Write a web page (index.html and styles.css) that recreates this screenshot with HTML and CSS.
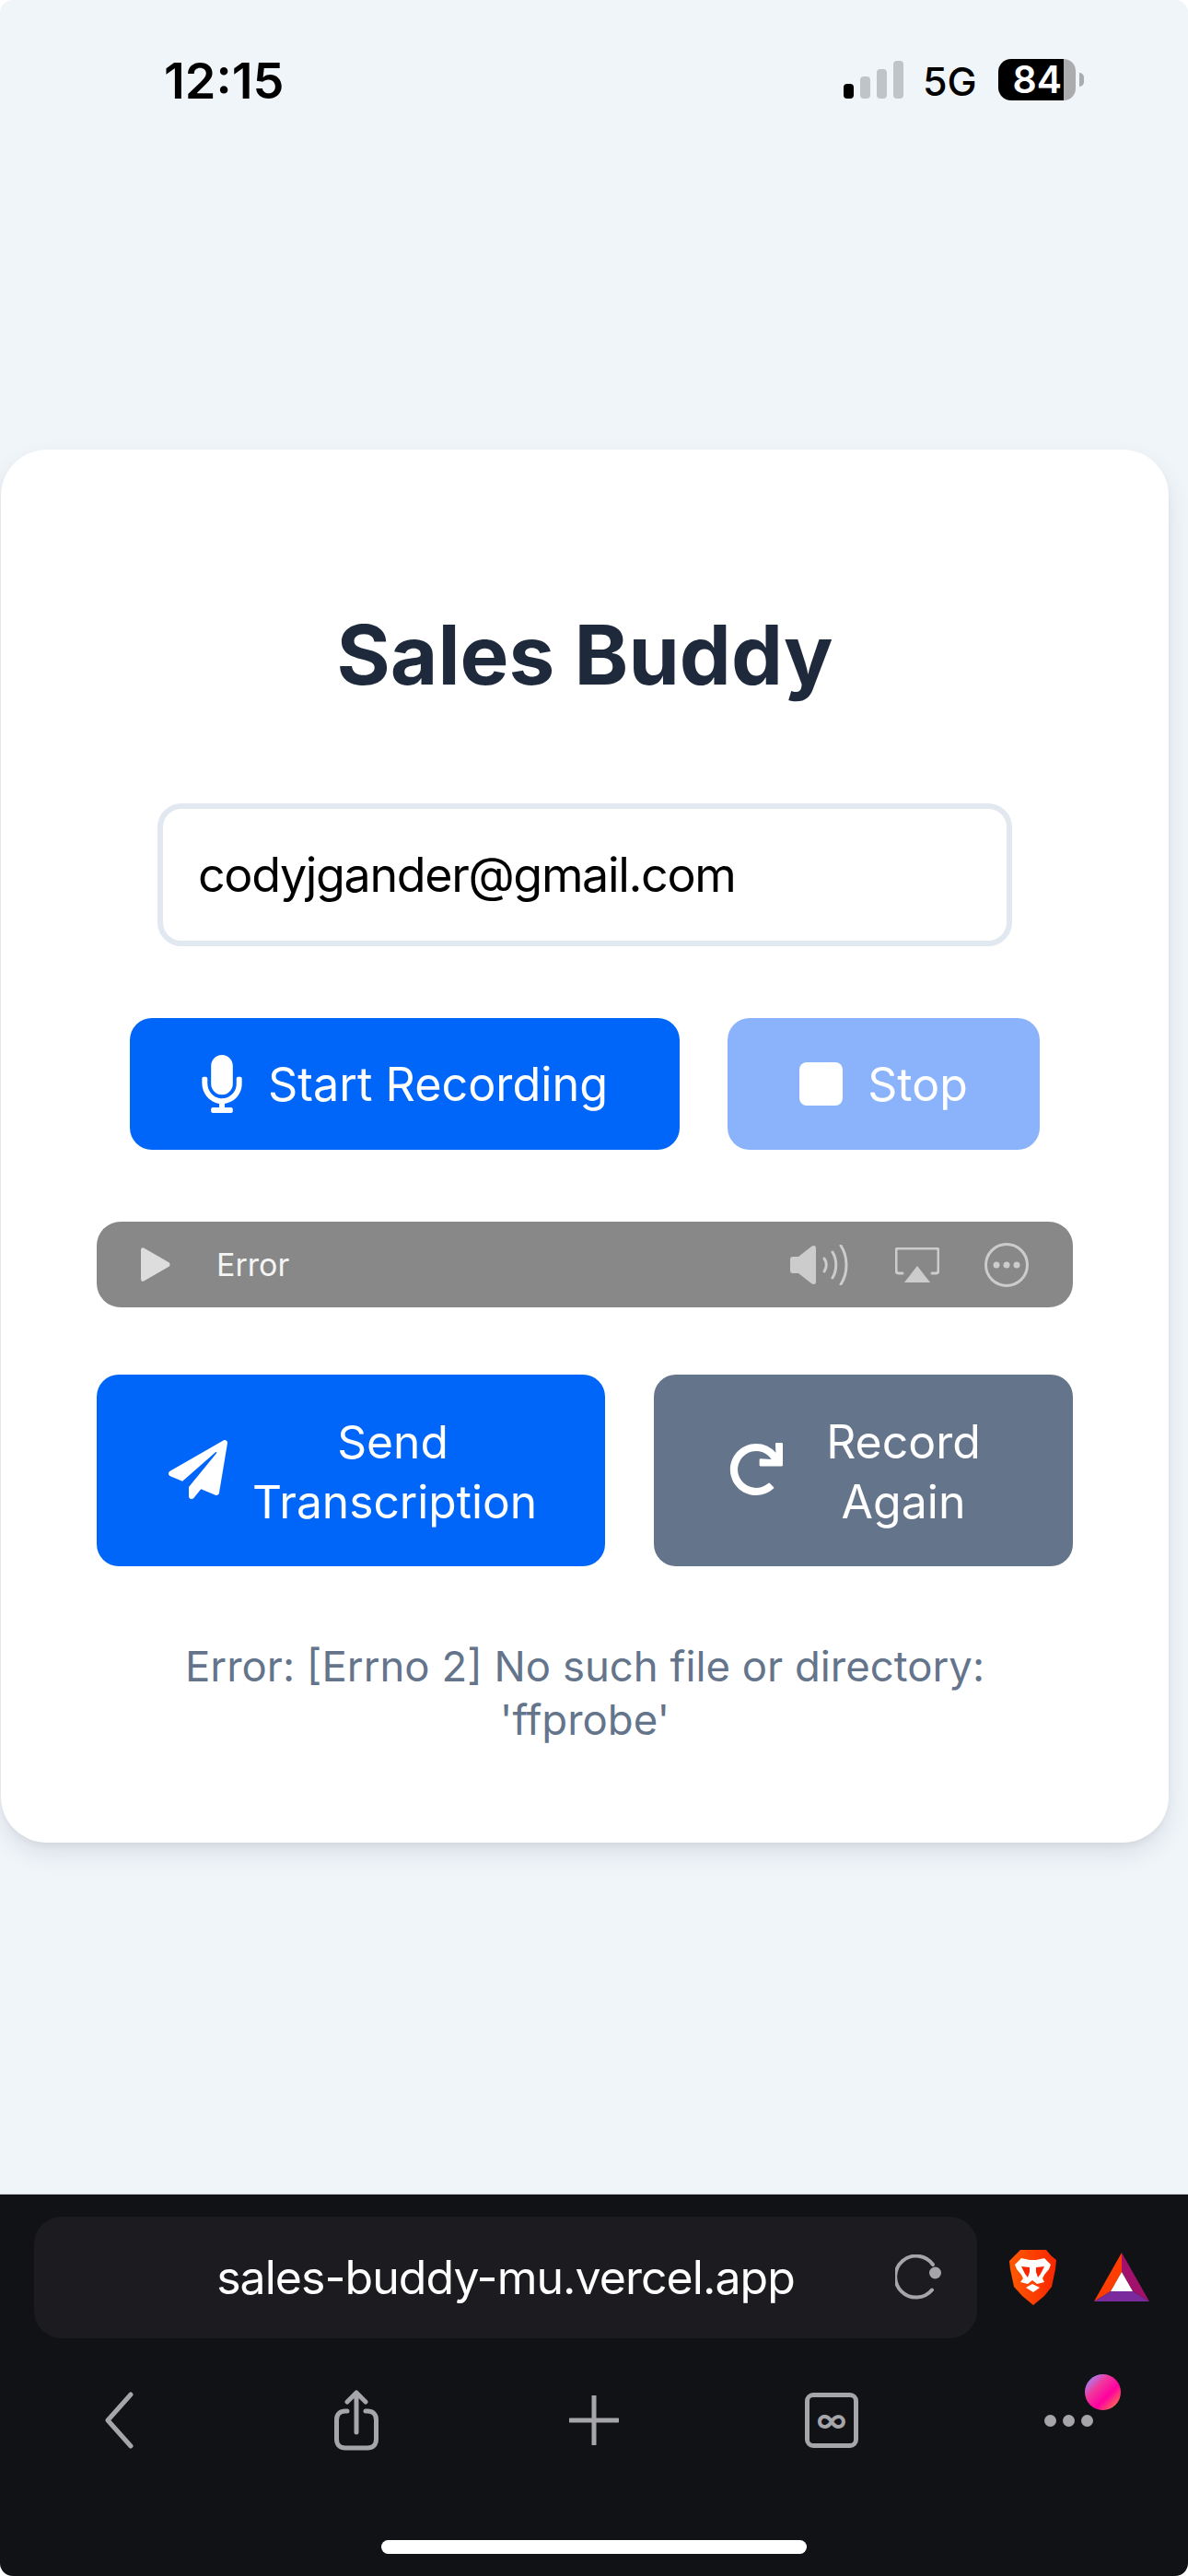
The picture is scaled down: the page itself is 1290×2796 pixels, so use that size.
FILE: index.html
```html
<!DOCTYPE html>
<html lang="en">
<head>
  <meta charset="UTF-8">
  <meta name="viewport" content="width=device-width, initial-scale=1.0">
  <title>Sales Buddy</title>
  <link rel="stylesheet" href="styles.css">
</head>
<body>
  <div class="screen">
    <!-- status bar -->
    <div class="status">
      <span class="time">12:15</span>
      <div class="status-right">
        <div class="signal">
          <i class="bar b1 on"></i><i class="bar b2"></i><i class="bar b3"></i><i class="bar b4"></i>
        </div>
        <span class="net">5G</span>
        <div class="battery"><span class="level">84</span><i class="rest"></i></div>
        <i class="tip"></i>
      </div>
    </div>

    <main class="page">
      <div class="card">
        <h1 class="title">Sales Buddy</h1>
        <div class="email">codyjgander@gmail.com</div>

        <div class="row row-rec">
          <button class="btn blue start">
            <svg class="ic-mic" viewBox="0 0 352 512"><path d="M176 352c53.02 0 96-42.98 96-96V96c0-53.02-42.98-96-96-96S80 42.98 80 96v160c0 53.02 42.98 96 96 96zm160-160h-16c-8.84 0-16 7.16-16 16v48c0 74.8-64.49 134.82-140.79 127.38C96.71 376.89 48 317.11 48 250.3V208c0-8.84-7.16-16-16-16H16c-8.84 0-16 7.16-16 16v40.16c0 89.64 63.97 169.55 152 181.69V464H96c-8.84 0-16 7.16-16 16v16c0 8.84 7.16 16 16 16h160c8.84 0 16-7.16 16-16v-16c0-8.84-7.16-16-16-16h-56v-33.77C285.71 418.47 352 344.9 352 256v-48c0-8.84-7.16-16-16-16z"/></svg>
            <span>Start Recording</span>
          </button>
          <button class="btn stop">
            <i class="ic-stop"></i>
            <span>Stop</span>
          </button>
        </div>

        <div class="audio">
          <svg class="ic-play" viewBox="0 0 32 37"><path d="M0 3c0-3 2-3.500 4-2l26 15c2 1.200 2 3.800 0 5L4 36c-2 1.500-4 1-4-2z"/></svg>
          <span class="audio-err">Error</span>
          <div class="audio-right">
            <svg class="ic-vol" viewBox="0 0 66 44"><path class="fill" d="M1 16c0-2 1-3 3-3h6L24 2c3-2 5-1 5 2v36c0 3-2 4-5 2L10 31H4c-2 0-3-1-3-3z"/><path class="wave" d="M38 15c3 4 3 10 0 14M47 8c5 8 5 20 0 28M56 1c8 12 8 30 0 42"/></svg>
            <svg class="ic-air" viewBox="0 0 48 38"><path class="line" d="M8 28H4c-2 0-3-1-3-3V3c0-1 1-2 2-2h42c1 0 2 1 2 2v22c0 2-1 3-3 3h-4"/><path class="fill" d="M24 20l14 18H10z"/></svg>
            <svg class="ic-more" viewBox="0 0 48 48"><circle class="line" cx="24" cy="24" r="22.500"/><circle class="fill" cx="13" cy="24" r="3.500"/><circle class="fill" cx="24" cy="24" r="3.500"/><circle class="fill" cx="35" cy="24" r="3.500"/></svg>
          </div>
        </div>

        <div class="row row-send">
          <button class="btn blue tall send">
            <svg class="ic-plane" viewBox="0 0 512 512"><path d="M476 3.200L12.500 270.600c-18.100 10.400-15.800 35.600 2.200 43.200L121 358.400l287.300-253.200c5.500-4.900 13.300 2.600 8.600 8.300L176 407v80.500c0 23.600 28.500 32.900 42.500 15.800L282 426l124.600 52.200c14.200 6 30.400-2.900 33-18.200l72-432C515 7.800 493.300-6.800 476 3.200z"/></svg>
            <span class="send-txt">Send Transcription</span>
          </button>
          <button class="btn slate tall again">
            <svg class="ic-redo" viewBox="0 0 512 512"><path d="M500.330 0h-47.410a12 12 0 0 0-12 12.570l4 82.760A247.420 247.420 0 0 0 256 8C119.340 8 7.900 119.530 8 256.190 8.100 393.070 119.100 504 256 504a247.100 247.100 0 0 0 166.180-63.910 12 12 0 0 0 .48-17.430l-34-34a12 12 0 0 0-16.380-.55A176 176 0 1 1 402.100 157.800l-101.530-4.870a12 12 0 0 0-12.570 12v47.410a12 12 0 0 0 12 12h200.330a12 12 0 0 0 12-12V12a12 12 0 0 0-12-12z"/></svg>
            <span class="again-txt">Record Again</span>
          </button>
        </div>

        <p class="err">Error: [Errno 2] No such file or directory: 'ffprobe'</p>
      </div>
    </main>

    <!-- browser chrome -->
    <div class="chrome">
      <div class="addr-row">
        <div class="pill">
          <span class="url">sales-buddy-mu.vercel.app</span>
          <svg class="ic-reload" viewBox="0 0 56 50"><path class="arc" d="M40 38.500A22.500 22.500 0 1 1 41 11"/><circle class="dot" cx="43.500" cy="20" r="6.500"/></svg>
        </div>
        <svg class="ic-brave" viewBox="0 0 51 60">
          <defs><linearGradient id="bv" x1="0" x2="1" y1="0" y2="0"><stop offset="0" stop-color="#ff5a00"/><stop offset="1" stop-color="#f92500"/></linearGradient></defs>
          <path fill="url(#bv)" d="M12 0h28l5 6 6 5-1 10-4 19-8 10-12 10-12-10-9-10-4-19-1-9 6-6z"/>
          <path fill="#fff" d="M13 9l9 2h7l9-2 7 7-2 5-5 6-2 4 2 4-8 2-5-4-5 4-8-2 3-4-2-4-5-6-2-5z"/>
          <path fill="#f92500" d="M13 18l9 1 0 5-2 6-3-4zM38 18l-9 1 0 5 2 6 3-4z"/>
          <path fill="#fff" d="M18 41l7-4 8 4-7 5z"/>
        </svg>
        <svg class="ic-bat" viewBox="0 0 60 53">
          <path fill="#ff3d00" d="M30 0L0 53 18 42 30 21z"/>
          <path fill="#a1106a" d="M30 0L60 53 42 42 30 21z"/>
          <path fill="#7a2a9c" d="M0 53L18 42H42L60 53z"/>
          <path fill="#fff" d="M30 21L42 42H18z"/>
        </svg>
      </div>
      <div class="tools">
        <div class="tool"><svg class="ic-back" viewBox="0 0 32 62"><path d="M29 3L4 31l25 28"/></svg></div>
        <div class="tool"><svg class="ic-share" viewBox="0 0 50 66"><path d="M15 23h-2c-6 0-9.500 3.500-9.500 9.500v21c0 6 3.500 9.500 9.500 9.500h24c6 0 9.500-3.500 9.500-9.500v-21c0-6-3.500-9.500-9.500-9.500h-2M25 46V4M15 13L25 3l10 10"/></svg></div>
        <div class="tool"><svg class="ic-plus" viewBox="0 0 54 54"><path d="M27 1v52M1 27h52"/></svg></div>
        <div class="tool"><div class="tabs">∞</div></div>
        <div class="tool tool-more">
          <i class="dot3"></i><i class="dot3"></i><i class="dot3"></i>
          <i class="badge"></i>
        </div>
      </div>
      <div class="home"></div>
    </div>
  </div>
</body>
</html>
```

FILE: styles.css
```css
*{margin:0;padding:0;box-sizing:border-box;}
body{background:#fff;font-family:Inter,"Noto Sans",sans-serif;}
button{font-family:inherit;border:0;}
i{display:block;}

.screen{width:1290px;height:2796px;background:#f0f5fa;border-radius:14px;overflow:hidden;display:flex;flex-direction:column;}

/* status bar */
.status{height:180px;flex:none;display:flex;justify-content:space-between;padding:62px 113px 0 178px;}
.time{font-size:54px;font-weight:600;line-height:52px;color:#000;}
.status-right{display:flex;align-items:flex-start;padding-top:4px;height:50px;}
.signal{display:flex;align-items:flex-end;gap:7px;height:41px;}
.bar{width:11px;background:#c0c4c8;border-radius:4px;}
.bar.on{background:#000;}
.b1{height:16px;}
.b2{height:24px;}
.b3{height:32px;}
.b4{height:41px;}
.net{font-size:43px;font-weight:500;line-height:44px;color:#000;margin-left:21px;width:56px;}
.battery{display:flex;width:84px;height:45px;margin-left:26px;margin-top:-2px;}
.level{width:71px;background:#000;color:#fff;font-size:41px;font-weight:600;line-height:45px;text-align:right;padding-right:2px;border-radius:14px 0 0 14px;}
.rest{flex:1;background:#aaacae;border-radius:0 14px 14px 0;}
.tip{width:5px;height:15px;margin:13px 0 0 4px;background:#aaacae;border-radius:0 8px 8px 0;}

/* card */
.page{flex:1;padding:308px 0 0 1px;}
.card{width:1268px;height:1512px;background:#fff;border-radius:50px;box-shadow:0 12px 30px -4px rgba(15,23,42,.12),0 4px 8px -2px rgba(15,23,42,.06);padding:171px 102px 0;display:flex;flex-direction:column;align-items:center;}
.title{font-size:89px;font-weight:700;line-height:104px;color:#1e293b;}
.email{width:928px;height:155px;margin-top:109px;border:6px solid #e2e8f0;border-radius:26px;padding-left:38px;font-size:52px;line-height:143px;letter-spacing:-1.35px;color:#000;}
.row{display:flex;}
.row-rec{margin-top:78px;gap:52px;}
.row-send{margin-top:73px;gap:53px;}

.btn{display:flex;align-items:center;justify-content:center;color:#fff;border-radius:24px;height:143px;font-size:50px;font-weight:400;}
.blue{background:#0066fa;}
.slate{background:#64748b;}
.stop{background:#8bb3fb;width:339px;gap:27px;}
.start{width:597px;gap:28px;font-size:50.300px;}
.tall{height:208px;line-height:65px;}
.send{width:552px;gap:27px;font-size:49.700px;}
.again{width:455px;gap:29px;}
.send-txt{width:305px;margin-top:4px;}
.again-txt{width:204px;margin-top:4px;}
.ic-mic{width:44px;height:63px;fill:#fff;}
.ic-stop{width:47px;height:47px;background:#fff;border-radius:8px;}
.ic-plane{width:64px;height:64px;fill:#fff;margin-bottom:3px;}
.ic-redo{width:58px;height:58px;fill:#fff;margin-bottom:3px;}

/* audio player */
.audio{width:1060px;height:93px;margin-top:78px;background:#888;border-radius:26px;display:flex;align-items:center;padding:0 48px;}
.ic-play{width:32px;height:37px;fill:#ddd;flex:none;}
.audio-err{font-size:34px;color:#f4f4f4;margin-left:50px;}
.audio-right{margin-left:auto;display:flex;align-items:center;}
.audio-right .fill{fill:#ccc;}
.audio-right .line,.audio-right .wave{fill:none;stroke:#ccc;stroke-width:3;stroke-linecap:round;}
.ic-vol{width:66px;height:44px;}
.ic-air{width:48px;height:38px;margin-left:49px;}
.ic-more{width:48px;height:48px;margin-left:49px;}

.err{width:900px;margin-top:80px;font-size:45.500px;line-height:58px;text-align:center;color:#64748b;}

/* browser */
.chrome{height:415px;flex:none;background:#111216;border-top:1px solid #c9ced3;padding-top:24px;position:relative;}
.addr-row{display:flex;align-items:flex-start;padding-left:37px;}
.pill{width:1024px;height:132px;background:#1c1c20;border-radius:30px;display:flex;align-items:center;justify-content:center;position:relative;}
.url{font-size:50px;line-height:132px;letter-spacing:-.95px;color:#fff;}
.ic-reload{position:absolute;right:33px;top:41px;width:56px;height:50px;}
.ic-reload .arc{fill:none;stroke:#a5a5aa;stroke-width:4;stroke-linecap:round;}
.ic-reload .dot{fill:#a5a5aa;}
.ic-brave{width:51px;height:60px;margin:36px 0 0 35px;flex:none;}
.ic-bat{width:60px;height:53px;margin:39px 0 0 41px;flex:none;}

.tools{display:grid;grid-template-columns:repeat(5,258px);margin-top:53px;height:72px;}
.tool{display:flex;align-items:center;justify-content:center;position:relative;}
.tool svg{fill:none;stroke:#a5a5aa;stroke-width:5;stroke-linecap:round;stroke-linejoin:round;}
.ic-back{width:32px;height:62px;}
.ic-share{width:50px;height:66px;}
.ic-plus{width:54px;height:54px;}
.tabs{width:58px;height:60px;border:5px solid #a5a5aa;border-radius:9px;color:#a5a5aa;font-size:34px;font-weight:600;line-height:50px;text-align:center;}
.tool-more{gap:7px;padding-right:2px;}
.dot3{width:13px;height:13px;border-radius:50%;background:#a5a5aa;}
.badge{position:absolute;left:146px;top:-14px;width:39px;height:39px;border-radius:50%;background:linear-gradient(135deg,#9d8cff 8%,#f0389c 35%,#ff00a0 62%,#ff7a4a 92%);}
.home{position:absolute;left:414px;top:375px;width:462px;height:15px;background:#fff;border-radius:8px;}
```
